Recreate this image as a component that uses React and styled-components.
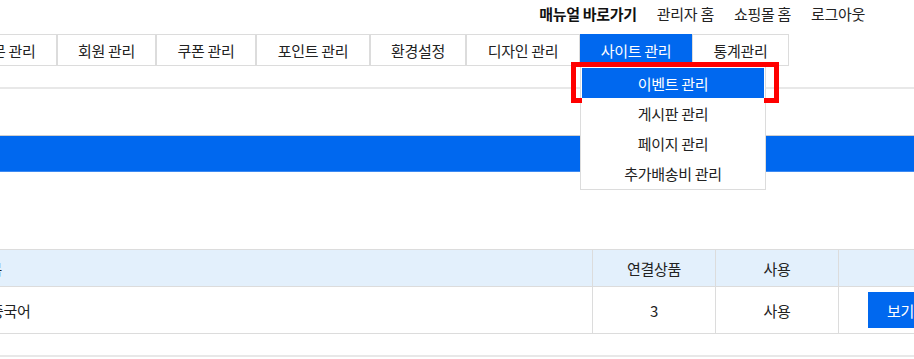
import React from 'react';
import styled, { createGlobalStyle } from 'styled-components';

const BLUE = '#0068ef';
const INK = '#222';

const GlobalStyle = createGlobalStyle`
  html, body {
    margin: 0;
    padding: 0;
    overflow: hidden;
    background: #fff;
  }

  body {
    font-family: "Noto Sans CJK KR", "Noto Sans", sans-serif;
    font-size: 15px;
    letter-spacing: -0.3px;
    color: ${INK};
  }
`;

const Page = styled.div`
  width: 914px;
  height: 359px;
  overflow: hidden;
`;

const TopLinks = styled.ul`
  display: flex;
  justify-content: flex-end;
  align-items: center;
  gap: 20px;
  height: 27px;
  margin: 0;
  padding: 0 49px 0 0;
  list-style: none;
`;

const TopLink = styled.li`
  font-size: 15px;
  color: ${({ $strong }) => ($strong ? '#111' : INK)};
  font-weight: ${({ $strong }) => ($strong ? 700 : 400)};
  white-space: nowrap;
`;

const TabBar = styled.nav`
  display: flex;
  justify-content: flex-end;
  height: 32px;
  margin-top: 7px;
  padding-right: 125px;
`;

const Tab = styled.div`
  position: relative;
  flex: 0 0 ${({ $w }) => $w}px;
  box-sizing: border-box;
  display: flex;
  align-items: center;
  justify-content: center;
  height: 32px;
  border: 1px solid ${({ $active }) => ($active ? BLUE : '#dcdcdc')};
  background: ${({ $active }) => ($active ? BLUE : '#fff')};
  color: ${({ $active }) => ($active ? '#fff' : INK)};
  font-size: 15px;
  white-space: nowrap;
`;

const Dropdown = styled.ul`
  position: absolute;
  top: calc(100% + 1px);
  left: -1px;
  z-index: 10;
  box-sizing: border-box;
  width: 186px;
  margin: 0;
  padding: 1px;
  list-style: none;
  background: #fff;
  border: 1px solid #dcdcdc;
`;

const DropItem = styled.li`
  position: relative;
  display: flex;
  align-items: center;
  justify-content: center;
  height: 30px;
  background: ${({ $active }) => ($active ? BLUE : '#fff')};
  color: ${({ $active }) => ($active ? '#fff' : INK)};
  font-size: 15px;
`;

const Highlight = styled.span`
  position: absolute;
  left: -11px;
  top: -6px;
  box-sizing: border-box;
  width: 208px;
  height: 41px;
  border: 5px solid #ff0000;
  pointer-events: none;
`;

const Rule = styled.div`
  height: ${({ $h }) => $h || 1}px;
  margin-top: ${({ $top }) => $top}px;
  background: #e8e8e8;
`;

const TitleBar = styled.div`
  height: 35px;
  margin-top: 46px;
  background: ${BLUE};
  border-top: 1px solid #cfcfcf;
  border-bottom: 1px solid #3d8af2;
`;

const Table = styled.div`
  width: calc(100% + 82px);
  margin: 77px 0 0 -40px;
  border-top: 1px solid #dcdcdc;
`;

const Row = styled.div`
  display: grid;
  grid-template-columns: 1fr 123px 123px 118px;
  height: ${({ $head }) => ($head ? 36 : 46)}px;
  background: ${({ $head }) => ($head ? '#e3f0fc' : '#fff')};
  border-bottom: 1px solid #dcdcdc;
`;

const Cell = styled.div`
  display: flex;
  align-items: center;
  justify-content: ${({ $left }) => ($left ? 'flex-start' : 'center')};
  padding-left: ${({ $pad }) => $pad || 0}px;
  border-left: ${({ $first }) => ($first ? 'none' : '1px solid #dcdcdc')};
  font-size: 15px;
  color: ${INK};
  white-space: nowrap;
`;

const ViewButton = styled.button`
  box-sizing: border-box;
  width: 64px;
  height: 36px;
  margin-left: 4px;
  padding: 0 0 0 2px;
  border: 0;
  background: ${BLUE};
  color: #fff;
  font-family: inherit;
  font-size: 15px;
  letter-spacing: -0.3px;
  cursor: pointer;
`;

const tabs = [
  { label: '상품 관리', w: 100 },
  { label: '주문 관리', w: 100 },
  { label: '회원 관리', w: 99 },
  { label: '쿠폰 관리', w: 100 },
  { label: '포인트 관리', w: 114 },
  { label: '환경설정', w: 96 },
  { label: '디자인 관리', w: 114 },
  { label: '사이트 관리', w: 112, active: true },
  { label: '통계관리', w: 97 },
];

const siteMenu = ['이벤트 관리', '게시판 관리', '페이지 관리', '추가배송비 관리'];

const App = () => (
  <>
    <GlobalStyle />
    <Page>
      <TopLinks>
        <TopLink $strong>매뉴얼 바로가기</TopLink>
        <TopLink>관리자 홈</TopLink>
        <TopLink>쇼핑몰 홈</TopLink>
        <TopLink>로그아웃</TopLink>
      </TopLinks>

      <TabBar>
        {tabs.map((tab) => (
          <Tab key={tab.label} $w={tab.w} $active={tab.active}>
            {tab.label}
            {tab.active && (
              <Dropdown>
                {siteMenu.map((item, i) => (
                  <DropItem key={item} $active={i === 0}>
                    {item}
                    {i === 0 && <Highlight />}
                  </DropItem>
                ))}
              </Dropdown>
            )}
          </Tab>
        ))}
      </TabBar>

      <Rule $top={21} $h={2} />
      <TitleBar />

      <Table>
        <Row $head>
          <Cell $first $left $pad={15}>제목</Cell>
          <Cell>연결상품</Cell>
          <Cell>사용</Cell>
          <Cell />
        </Row>
        <Row>
          <Cell $first $left $pad={30}>중국어</Cell>
          <Cell>3</Cell>
          <Cell>사용</Cell>
          <Cell>
            <ViewButton>보기</ViewButton>
          </Cell>
        </Row>
      </Table>

      <Rule $top={21} $h={2} />
    </Page>
  </>
);

export default App;
